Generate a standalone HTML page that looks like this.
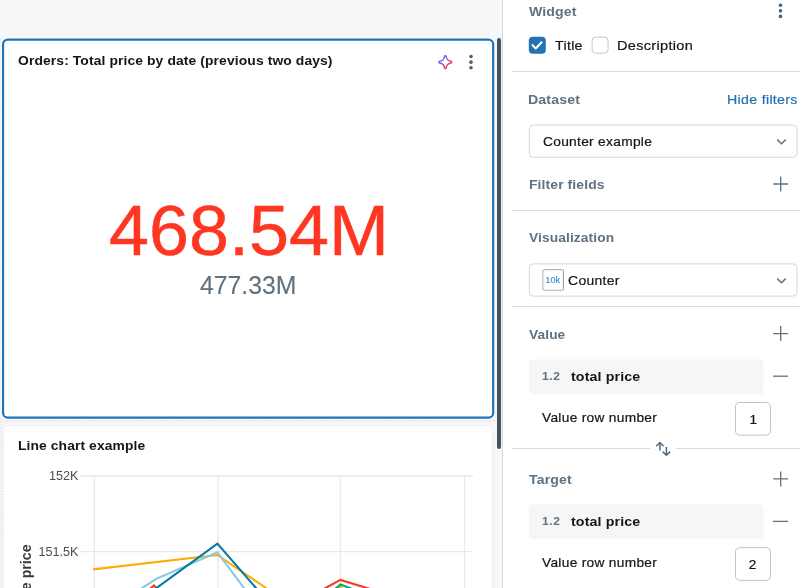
<!DOCTYPE html>
<html lang="en">
<head>
<meta charset="utf-8">
<title>Dashboard editor</title>
<style>
*{box-sizing:border-box;margin:0;padding:0}
html,body{width:800px;height:588px;overflow:hidden;background:#f6f7f9;font-family:"Liberation Sans",sans-serif;color:#11171c}
#root{position:relative;width:800px;height:588px;overflow:hidden;background:#f6f7f9;will-change:transform}
.abs{position:absolute}
.t{position:absolute;white-space:nowrap;line-height:1;transform-origin:0 0}
.b{font-weight:700}
.t:not(.b){-webkit-text-stroke:0.22px currentColor}
#big{-webkit-text-stroke:0.5px currentColor}
#small{-webkit-text-stroke:0.15px currentColor}
#card2{left:3px;top:425px;width:489.5px;height:180px;background:#fff;border:1px solid #eceff2;border-radius:5px}
#sb{left:496.8px;top:38px;width:4px;height:411px;background:#445461;border-radius:2px}
#panel{left:502px;top:0;width:298px;height:588px;background:#fff;border-left:1px solid #cfd8e0}
.hr{position:absolute;left:512px;right:0;height:1px;background:#d4dce4}
</style>
</head>
<body>
<div id="root">
  <!-- faint layout-grid dots -->
  <div class="abs" style="left:0;top:420.4px;width:495px;height:2px;background-image:radial-gradient(circle at 1px 1px,#e2e7ed 0.55px,rgba(226,231,237,0) 1.0px);background-size:3.15px 2px"></div>
  <div class="abs" style="left:-0.5px;top:38px;width:2px;height:550px;background-image:radial-gradient(circle at 1px 1px,#e2e7ed 0.55px,rgba(226,231,237,0) 1.0px);background-size:2px 3.15px"></div>
  <!-- left canvas: selected counter widget -->
  <svg id="card1" class="abs" style="left:0;top:34px" width="500" height="390" viewBox="0 34 500 390">
    <rect x="3.05" y="39.7" width="490.15" height="377.95" rx="4.6" fill="#fff" stroke="#fff" stroke-width="4.4"/>
    <rect x="3.05" y="39.7" width="490.15" height="377.95" rx="4.6" fill="#fff" stroke="#2272b4" stroke-width="2.2"/>
  </svg>
  <svg class="abs" style="left:430px;top:46px" width="60" height="32" viewBox="430 46 60 32">
    <defs>
      <linearGradient id="sg" x1="-4" y1="-4" x2="4" y2="4" gradientUnits="userSpaceOnUse">
        <stop offset="0" stop-color="#4a74f5"/>
        <stop offset="0.5" stop-color="#c631d8"/>
        <stop offset="1" stop-color="#ff3f45"/>
      </linearGradient>
    </defs>
    <path transform="translate(445.35 62.1)" d="M-0.8 -5.9Q0 -7 0.8 -5.9C1 -3.2 3.2 -1 5.9 -0.8Q7 0 5.9 0.8C3.2 1 1 3.2 0.8 5.9Q0 7 -0.8 5.9C-1 3.2 -3.2 1 -5.9 0.8Q-7 0 -5.9 -0.8C-3.2 -1 -1 -3.2 -0.8 -5.9Z" fill="none" stroke="url(#sg)" stroke-width="1.5" stroke-linejoin="round"/>
    <g fill="#4c6070"><circle cx="471" cy="56.5" r="1.8"/><circle cx="471" cy="62.15" r="1.8"/><circle cx="471" cy="67.8" r="1.8"/></g>
  </svg>

  <!-- line chart widget -->
  <div id="card2" class="abs"></div>
  <svg class="abs" style="left:0;top:420px" width="500" height="168" viewBox="0 420 500 168">
    <g stroke="#e9e9e9" stroke-width="1.3" fill="none">
      <path d="M80 476H473M80 551.6H473"/>
      <path d="M94.4 476V588M218 476V588M340.4 476V588M464.5 476V588"/>
    </g>
    <g fill="none" stroke-width="2.1" stroke-linejoin="miter">
      <path stroke="#ff3621" d="M146 592L154 585.5L160 592"/>
      <path stroke="#ffab00" d="M93 569.4L217.4 555L266 588L270 591"/>
      <path stroke="#8bcae7" d="M136 592L156 579L217.4 552.4L247 592"/>
      <path stroke="#077a9d" d="M151 592L217.4 543.6L259.5 592"/>
      <path stroke="#ffab00" d="M327 592L340.4 586.7L345 592"/>
      <path stroke="#00a972" d="M331.7 592L340.4 584.4L360 592"/>
      <path stroke="#ff3621" d="M318.1 592L340.4 579.9L380.1 592"/>
    </g>
    <g font-family="Liberation Sans, sans-serif" font-size="12.6" fill="#4d4d4d">
      <text x="78.3" y="480.4" text-anchor="end">152K</text>
      <text x="78.3" y="556" text-anchor="end">151.5K</text>
      <text transform="translate(30.6,590.2) rotate(-90)" font-weight="700" font-size="14.2" fill="#3a3a3a">e price</text>
    </g>
  </svg>
  <div id="sb" class="abs"></div>

  <!-- right config panel -->
  <div id="panel" class="abs"></div>
  <svg class="abs" style="left:520px;top:30px" width="280" height="558" viewBox="520 30 280 558">
    <!-- checkboxes -->
    <rect x="528.8" y="36.65" width="17" height="17" rx="4" fill="#2272b4"/>
    <rect x="592.1" y="37.15" width="16" height="16" rx="3.6" fill="#fff" stroke="#bdcad6" stroke-width="1"/>
    <!-- select boxes -->
    <rect x="529.4" y="125" width="267.6" height="32.3" rx="4" fill="#fff" stroke="#cfd8e1" stroke-width="1"/>
    <rect x="529.4" y="263.9" width="267.6" height="32.2" rx="4" fill="#fff" stroke="#cfd8e1" stroke-width="1"/>
    <!-- counter viz icon frame -->
    <rect x="543" y="269.7" width="20.5" height="20.5" rx="1.2" fill="#fff" stroke="#9aa5ae" stroke-width="1"/>
    <rect x="544" y="270.7" width="18.5" height="18.5" rx="0.6" fill="none" stroke="#eef1f4" stroke-width="1"/>
    <!-- field chips -->
    <rect x="528.9" y="359.4" width="234.7" height="34.8" rx="4" fill="#f6f6f6"/>
    <rect x="528.9" y="504.55" width="234.7" height="34.8" rx="4" fill="#f6f6f6"/>
    <!-- row-number inputs -->
    <rect x="735.5" y="402.5" width="35" height="32.6" rx="4.2" fill="#fff" stroke="#b6c4d1" stroke-width="1"/>
    <rect x="735.5" y="547.7" width="35" height="32.6" rx="4.2" fill="#fff" stroke="#b6c4d1" stroke-width="1"/>
  </svg>
  <svg class="abs" style="left:770px;top:0" width="30" height="26" viewBox="770 0 30 26">
    <g fill="#4c6478"><circle cx="780.5" cy="5.25" r="1.8"/><circle cx="780.5" cy="10.85" r="1.8"/><circle cx="780.5" cy="16.4" r="1.8"/></g>
  </svg>
  <svg class="abs" style="left:528px;top:36px" width="20" height="20" viewBox="528 36 20 20"><path d="M532.5 45.1L535.7 48.5L541.6 42.3" fill="none" stroke="#fff" stroke-width="2" stroke-linecap="round" stroke-linejoin="round"/></svg>
  <div class="hr" style="top:71px"></div>
  <div class="hr" style="top:209.6px"></div>
  <div class="t" style="left:545.5px;top:275.5px;font-size:9px;color:#3d93dc;letter-spacing:0px">10k</div>
  <div class="hr" style="top:306px"></div>
  <div class="hr" style="top:448px;left:512px;width:138px"></div>
  <div class="hr" style="top:448px;left:676px"></div>
  <svg class="abs" style="left:640px;top:120px" width="160" height="420" viewBox="640 120 160 420">
    <g fill="none" stroke="#5f7281" stroke-width="1.5" stroke-linecap="butt" stroke-linejoin="miter">
      <!-- chevrons -->
      <path d="M777.3 139.6L781.5 143.8L785.7 139.6"/>
      <path d="M777.3 278.6L781.5 282.8L785.7 278.6"/>
    </g>
    <g fill="none" stroke="#5f7281" stroke-width="1.3">
      <!-- plus icons -->
      <path d="M773.2 184H788.2M780.7 176.5V191.5"/>
      <path d="M773.2 333.6H788.2M780.7 326.1V341.1"/>
      <path d="M773.2 478.9H788.2M780.7 471.4V486.4"/>
      <!-- minus icons -->
      <path d="M773 376.2H788"/>
      <path d="M773 521.4H788"/>
    </g>
    <g fill="none" stroke="#556b7c" stroke-width="1.5" stroke-linejoin="miter">
      <!-- swap icon -->
      <path d="M659.9 450.6V442.6M656.2 446.2L659.9 442.5L663.6 446.2"/>
      <path d="M666.4 447.1V455.1M662.7 451.6L666.4 455.3L670.1 451.6"/>
    </g>
  </svg>
  <div class="t b" id="t1" style="left:17.54px;top:53.57px;font-size:13.5px;color:#11171c;letter-spacing:0.1px;transform:scaleX(1.028)">Orders: Total price by date (previous two days)</div>
  <div class="t" id="big" style="left:109.07px;top:197.17px;font-size:69.5px;color:#ff3621;letter-spacing:0px;transform:scaleX(1.0352)">468.54M</div>
  <div class="t" id="small" style="left:199.81px;top:272.94px;font-size:25px;color:#5f7281;letter-spacing:0px;transform:scaleX(0.9912)">477.33M</div>
  <div class="t b" id="t2" style="left:17.5px;top:438.57px;font-size:13.5px;color:#11171c;letter-spacing:0.1px;transform:scaleX(1.025)">Line chart example</div>
  <div class="t b" id="widget" style="left:528.68px;top:5.07px;font-size:13.5px;color:#5f7281;letter-spacing:0.1px;transform:scaleX(1.0466)">Widget</div>
  <div class="t" id="title" style="left:554.68px;top:38.57px;font-size:13.5px;color:#11171c;letter-spacing:0.3px;transform:scaleX(1.049)">Title</div>
  <div class="t" id="desc" style="left:617.12px;top:38.57px;font-size:13.5px;color:#11171c;letter-spacing:0.3px;transform:scaleX(1.0754)">Description</div>
  <div class="t b" id="dataset" style="left:528.28px;top:92.57px;font-size:13.5px;color:#5f7281;letter-spacing:0.1px;transform:scaleX(1.0511)">Dataset</div>
  <div class="t" id="hide" style="left:727.23px;top:92.57px;font-size:13.5px;color:#2272b4;letter-spacing:0.3px;transform:scaleX(1.0501)">Hide filters</div>
  <div class="t" id="cex" style="left:542.85px;top:134.82px;font-size:13.5px;color:#11171c;letter-spacing:0.3px;transform:scaleX(1.0172)">Counter example</div>
  <div class="t b" id="ff" style="left:528.94px;top:178.12px;font-size:13.5px;color:#5f7281;letter-spacing:0.1px;transform:scaleX(1.031)">Filter fields</div>
  <div class="t b" id="viz" style="left:528.7px;top:231.27px;font-size:13.5px;color:#5f7281;letter-spacing:0.1px;transform:scaleX(1.0188)">Visualization</div>
  <div class="t" id="counter" style="left:568.04px;top:273.77px;font-size:13.5px;color:#11171c;letter-spacing:0.3px;transform:scaleX(1.0335)">Counter</div>
  <div class="t b" id="value" style="left:528.7px;top:327.57px;font-size:13.5px;color:#5f7281;letter-spacing:0.1px;transform:scaleX(1.0159)">Value</div>
  <div class="t b" id="n12a" style="left:541.52px;top:371.01px;font-size:10.5px;color:#5f7281;letter-spacing:0.5px;transform:scaleX(1.1467)">1.2</div>
  <div class="t b" id="tpa" style="left:570.83px;top:369.97px;font-size:13.5px;color:#11171c;letter-spacing:0.1px;transform:scaleX(1.0554)">total price</div>
  <div class="t" id="vrna" style="left:541.95px;top:410.57px;font-size:13.5px;color:#11171c;letter-spacing:0.3px;transform:scaleX(1.0161)">Value row number</div>
  <div class="t" id="one" style="left:749.6px;top:412.57px;font-size:13.5px;color:#11171c;letter-spacing:0px;transform:none">1</div>
  <div class="t b" id="target" style="left:528.74px;top:472.57px;font-size:13.5px;color:#5f7281;letter-spacing:0.1px;transform:scaleX(1.0452)">Target</div>
  <div class="t b" id="n12b" style="left:541.52px;top:516.31px;font-size:10.5px;color:#5f7281;letter-spacing:0.5px;transform:scaleX(1.1467)">1.2</div>
  <div class="t b" id="tpb" style="left:570.83px;top:514.97px;font-size:13.5px;color:#11171c;letter-spacing:0.1px;transform:scaleX(1.0554)">total price</div>
  <div class="t" id="vrnb" style="left:541.95px;top:555.77px;font-size:13.5px;color:#11171c;letter-spacing:0.3px;transform:scaleX(1.0161)">Value row number</div>
  <div class="t" id="two" style="left:748.67px;top:557.77px;font-size:13.5px;color:#11171c;letter-spacing:0px;transform:none">2</div>
</div>
</body>
</html>
